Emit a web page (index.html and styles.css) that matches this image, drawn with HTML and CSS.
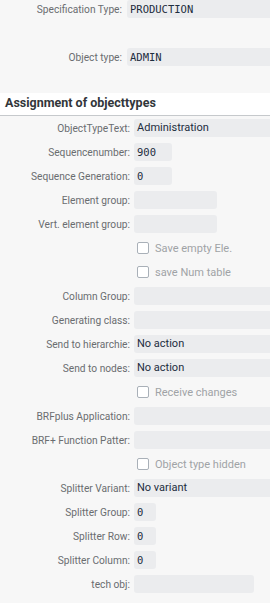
FILE: index.html
```html
<!DOCTYPE html>
<html lang="en">
<head>
    <meta charset="UTF-8" />
    <title>Assignment of objecttypes</title>
    <link rel="stylesheet" href="styles.css">
</head>
<body>
    <div class="top">
        <div class="top-row">
            <span class="label">Specification Type:</span>
            <span class="field mono">PRODUCTION</span>
        </div>
        <div class="top-row">
            <span class="label">Object type:</span>
            <span class="field mono">ADMIN</span>
        </div>
    </div>

    <h2 class="title">Assignment of objecttypes</h2>

    <div class="form">
        <span class="label">ObjectTypeText:</span>
        <span class="field">Administration</span>

        <span class="label">Sequencenumber:</span>
        <span class="field mono w38">900</span>

        <span class="label">Sequence Generation:</span>
        <span class="field mono w38">0</span>

        <span class="label">Element group:</span>
        <span class="field w83"></span>

        <span class="label">Vert. element group:</span>
        <span class="field w83"></span>

        <span></span>
        <label class="check"><span class="box"></span>Save empty Ele.</label>

        <span></span>
        <label class="check"><span class="box"></span>save Num table</label>

        <span class="label">Column Group:</span>
        <span class="field"></span>

        <span class="label">Generating class:</span>
        <span class="field"></span>

        <span class="label">Send to hierarchie:</span>
        <span class="field">No action</span>

        <span class="label">Send to nodes:</span>
        <span class="field">No action</span>

        <span></span>
        <label class="check"><span class="box"></span>Receive changes</label>

        <span class="label">BRFplus Application:</span>
        <span class="field"></span>

        <span class="label">BRF+ Function Patter:</span>
        <span class="field"></span>

        <span></span>
        <label class="check"><span class="box"></span>Object type hidden</label>

        <span class="label">Splitter Variant:</span>
        <span class="field">No variant</span>

        <span class="label">Splitter Group:</span>
        <span class="field mono w22">0</span>

        <span class="label">Splitter Row:</span>
        <span class="field mono w22">0</span>

        <span class="label">Splitter Column:</span>
        <span class="field mono w22">0</span>

        <span class="label">tech obj:</span>
        <span class="field w120"></span>
    </div>
</body>
</html>
```

FILE: styles.css
```css
body {
    margin: 0;
    background: #f7f7f7;
    font-family: Roboto, "Liberation Sans", Arial, sans-serif;
    font-size: 11px;
    color: #32363a;
    overflow: hidden;
}
.top {
    height: 93px;
    display: flex;
    flex-direction: column;
    gap: 30px;
}
.top-row {
    display: grid;
    grid-template-columns: 122px 1fr;
    column-gap: 5px;
    height: 18px;
    align-items: center;
}
.title {
    margin: 0;
    background: #fff;
    height: 22px;
    line-height: 20px;
    padding-left: 5px;
    font-size: 12.5px;
    font-weight: bold;
    color: #32363a;
    border-bottom: 1px solid #c6c9cc;
}
.form {
    display: grid;
    grid-template-columns: 130px 1fr;
    grid-auto-rows: 18px;
    column-gap: 4px;
    row-gap: 6px;
    padding-top: 3px;
    align-items: center;
}
.label {
    text-align: right;
    color: #6a6d70;
    font-size: 10.2px;
    white-space: nowrap;
}
.field {
    height: 18px;
    line-height: 18px;
    background: #ebecee;
    border-radius: 3px 0 0 3px;
    padding-left: 3px;
    color: #1d2d3e;
    white-space: nowrap;
    overflow: hidden;
    box-sizing: border-box;
}
.mono {
    font-family: "DejaVu Sans Mono", "Liberation Mono", monospace;
    font-size: 10.5px;
}
.w22, .w38, .w83, .w120 {
    border-radius: 3px;
}
.w22 { width: 22px; }
.w38 { width: 38px; }
.w83 { width: 83px; }
.w120 { width: 120px; }
.check {
    display: flex;
    align-items: center;
    gap: 6px;
    padding-left: 3px;
    color: #a0a3a6;
}
.box {
    width: 10px;
    height: 10px;
    border: 1px solid #a9b0b8;
    border-radius: 2px;
    background: #fff;
}
```
